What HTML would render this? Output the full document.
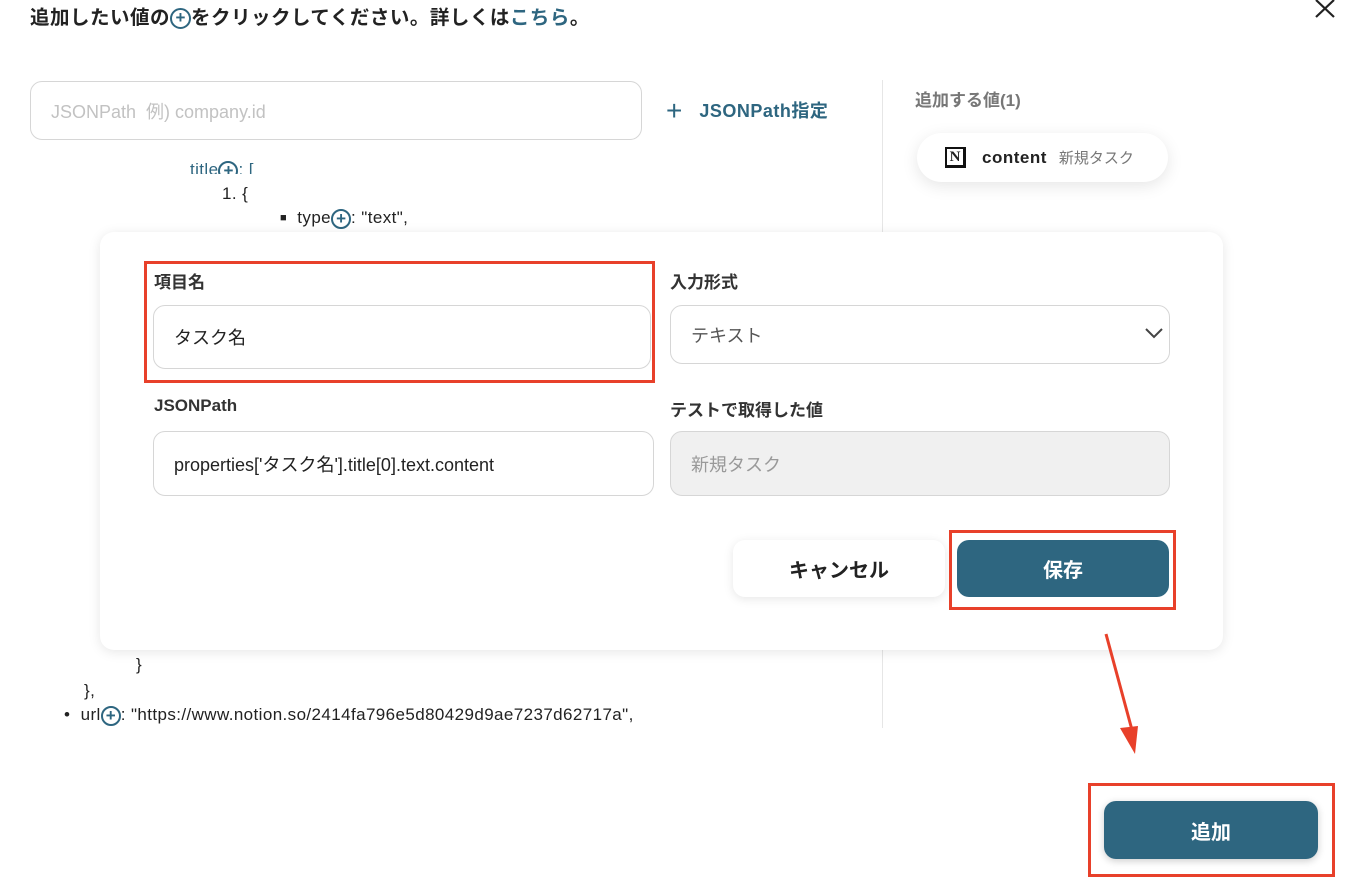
<!DOCTYPE html>
<html><head><meta charset="utf-8"><style>
*{box-sizing:border-box;margin:0;padding:0}
body{width:1356px;height:890px;background:#fff;position:relative;overflow:hidden;font-family:"Liberation Sans","Noto Sans CJK JP",sans-serif;color:#222}
.abs{position:absolute}
.pl{display:inline-block;width:20px;height:20px;border:2px solid #2e6680;border-radius:50%;color:#2e6680;text-align:center;line-height:15px;font-size:17px;font-weight:bold;vertical-align:middle;letter-spacing:0}
.inp{position:absolute;border:1px solid #d6d6d6;border-radius:12px;background:#fff;font-size:17px;padding-left:20px;display:flex;align-items:center}
.lbl{position:absolute;font-size:17px;font-weight:bold;color:#333}
.red{position:absolute;border:3px solid #e8402a}
.btn{position:absolute;background:#2e6680;color:#fff;font-size:19px;font-weight:bold;border-radius:12px;display:flex;align-items:center;justify-content:center}
.code{position:absolute;font-size:17px;color:#222;letter-spacing:.4px}
</style></head><body>
<div class="abs" style="left:30px;top:1px;font-size:19.5px;font-weight:bold;color:#222;letter-spacing:.5px">追加したい値の<span class="pl" style="width:21px;height:21px">+</span>をクリックしてください。詳しくは<span style="color:#2e6680">こちら</span>。</div>
<svg class="abs" style="left:1314px;top:0" width="22" height="18"><path d="M2 0 L20 17 M20 0 L2 17" stroke="#222" stroke-width="2.2"/></svg>
<div class="inp" style="left:30px;top:81px;width:612px;height:59px;color:#c2c2c2;font-size:18px">JSONPath&nbsp; 例) company.id</div>
<div class="abs" style="left:666px;top:95px;font-size:18px;font-weight:bold;color:#2e6680;letter-spacing:.5px"><span style="font-size:28px;font-weight:normal;vertical-align:-3px">+</span>&nbsp;&nbsp; JSONPath指定</div>
<div class="abs" style="left:882px;top:80px;width:1px;height:648px;background:#e6e6e6"></div>
<div class="abs" style="left:915px;top:86px;font-size:17px;font-weight:bold;color:#777">追加する値(1)</div>
<div class="abs" style="left:917px;top:133px;width:251px;height:49px;border-radius:25px;background:#fff;box-shadow:0 4px 16px rgba(0,0,0,.1);display:flex;align-items:center;padding-left:28px;font-size:17px">
<span style="display:inline-block;width:21px;height:21px;border:2px solid #111;border-right-width:3px;border-bottom-width:3px;font-family:'Liberation Serif',serif;font-weight:bold;font-size:15px;text-align:center;line-height:16px">N</span>
<b style="margin-left:16px;color:#222;letter-spacing:.5px">content</b><span style="margin-left:12px;font-size:15px;color:#777">新規タスク</span></div>
<div class="code" style="left:190px;top:160px;height:14px;overflow:hidden;color:#2e6680">title<span class="pl">+</span>: [</div>
<div class="code" style="left:222px;top:184px">1. {</div>
<div class="code" style="left:280px;top:208px"><span style="font-size:11px;vertical-align:2px">■</span>&nbsp; type<span class="pl">+</span>: "text",</div>
<div class="code" style="left:136px;top:655px">}</div>
<div class="code" style="left:84px;top:681px">},</div>
<div class="code" style="left:64px;top:705px">•&nbsp; url<span class="pl">+</span>: "https://www.notion.so/2414fa796e5d80429d9ae7237d62717a",</div>
<div class="abs" style="left:100px;top:232px;width:1123px;height:418px;background:#fff;border-radius:14px;box-shadow:0 2px 12px rgba(0,0,0,.1)"></div>
<div class="lbl" style="left:154px;top:268px">項目名</div>
<div class="inp" style="left:153px;top:305px;width:498px;height:64px;font-size:18px">タスク名</div>
<div class="red" style="left:144px;top:261px;width:511px;height:122px"></div>
<div class="lbl" style="left:670px;top:268px">入力形式</div>
<div class="inp" style="left:670px;top:305px;width:500px;height:59px;color:#555;font-size:18px">テキスト<svg style="position:absolute;right:5px;top:20px" width="20" height="14" viewBox="0 0 20 14"><path d="M2 3 L10 11 L18 3" fill="none" stroke="#444" stroke-width="2"/></svg></div>
<div class="lbl" style="left:154px;top:396px">JSONPath</div>
<div class="inp" style="left:153px;top:431px;width:501px;height:65px;font-size:18px">properties['タスク名'].title[0].text.content</div>
<div class="lbl" style="left:670px;top:396px">テストで取得した値</div>
<div class="inp" style="left:670px;top:431px;width:500px;height:65px;background:#f0f0f0;color:#999;font-size:18px">新規タスク</div>
<div class="abs" style="left:733px;top:540px;width:212px;height:57px;border-radius:12px;background:#fff;box-shadow:0 2px 10px rgba(0,0,0,.1);display:flex;align-items:center;justify-content:center;font-size:20px;font-weight:bold">キャンセル</div>
<div class="btn" style="left:957px;top:540px;width:212px;height:57px;font-size:20px">保存</div>
<div class="red" style="left:949px;top:530px;width:227px;height:80px"></div>
<svg class="abs" style="left:1100px;top:630px" width="50" height="130"><line x1="6" y1="4" x2="32" y2="100" stroke="#e8402a" stroke-width="3"/><path d="M20 98 L38 96 L35 124 Z" fill="#e8402a"/></svg>
<div class="btn" style="left:1104px;top:801px;width:214px;height:58px;box-shadow:0 2px 8px rgba(0,0,0,.2);font-size:20px">追加</div>
<div class="red" style="left:1088px;top:783px;width:247px;height:94px"></div>
</body></html>
